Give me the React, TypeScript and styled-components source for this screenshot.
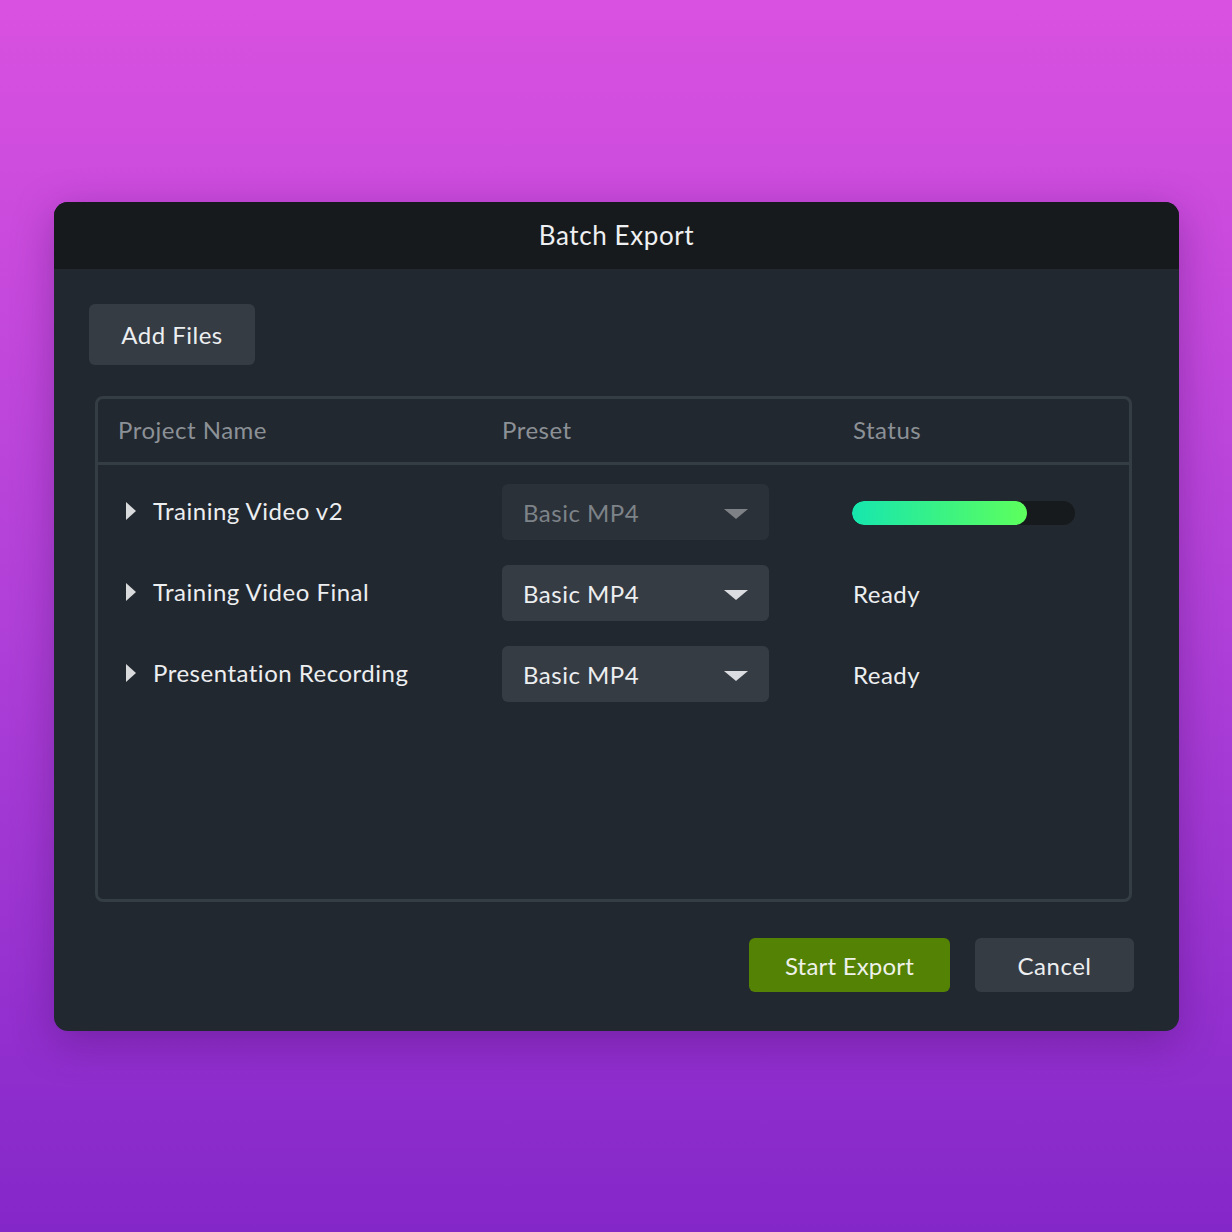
import styled, { createGlobalStyle } from 'styled-components';

const GlobalStyle = createGlobalStyle`
  html, body {
    margin: 0;
    padding: 0;
  }
  body {
    font-family: 'Lato', 'Noto Sans', sans-serif;
    letter-spacing: 0.5px;
    background: linear-gradient(180deg, #d951e0 0%, #b040d8 50%, #8427c9 100%);
    min-height: 1232px;
  }
`;

interface Project {
  name: string;
  disabled?: boolean;
  progress?: number;
}

const projects: Project[] = [
  { name: 'Training Video v2', disabled: true, progress: 78.5 },
  { name: 'Training Video Final' },
  { name: 'Presentation Recording' },
];

const App = () => {
  return (
    <>
      <GlobalStyle />
      <Page>
        <Dialog>
          <TitleBar>Batch Export</TitleBar>
          <Body>
            <SecondaryButton $width={166} $height={61}>
              Add Files
            </SecondaryButton>
            <Table>
              <HeaderRow>
                <HeaderCell>Project Name</HeaderCell>
                <HeaderCell>Preset</HeaderCell>
                <HeaderCell>Status</HeaderCell>
              </HeaderRow>
              <Rows>
                {projects.map(p => (
                  <Row key={p.name}>
                    <NameCell>
                      <Caret />
                      {p.name}
                    </NameCell>
                    <Select $disabled={p.disabled}>
                      Basic MP4
                      <Chevron $disabled={p.disabled} />
                    </Select>
                    <StatusCell>
                      {p.progress !== undefined ? (
                        <Track>
                          <Fill style={{ width: `${p.progress}%` }} />
                        </Track>
                      ) : (
                        'Ready'
                      )}
                    </StatusCell>
                  </Row>
                ))}
              </Rows>
            </Table>
            <Footer>
              <PrimaryButton>Start Export</PrimaryButton>
              <SecondaryButton $width={159} $height={54}>
                Cancel
              </SecondaryButton>
            </Footer>
          </Body>
        </Dialog>
      </Page>
    </>
  );
};
export default App;

const Page = styled.div`
  padding: 202px 0 0 54px;
  height: 1232px;
  box-sizing: border-box;
`;

const Dialog = styled.div`
  width: 1125px;
  height: 829px;
  border-radius: 14px;
  overflow: hidden;
  background: #22282f;
  box-shadow: 0 10px 40px rgba(60, 10, 90, 0.35);
  display: flex;
  flex-direction: column;
`;

const TitleBar = styled.div`
  height: 67px;
  background: #161a1d;
  color: #eef0f2;
  font-size: 26px;
  letter-spacing: 0.6px;
  display: flex;
  align-items: center;
  justify-content: center;
  padding-bottom: 2px;
  box-sizing: border-box;
`;

const Body = styled.div`
  flex: 1;
  padding: 35px 45px 39px 35px;
  display: flex;
  flex-direction: column;
  box-sizing: border-box;
`;

const SecondaryButton = styled.button<{ $width: number; $height: number }>`
  width: ${p => p.$width}px;
  height: ${p => p.$height}px;
  background: #363c44;
  color: #eceef0;
  border: none;
  border-radius: 6px;
  font-family: inherit;
  letter-spacing: inherit;
  font-size: 24px;
  padding: 0;
  cursor: pointer;
`;

const PrimaryButton = styled.button`
  width: 201px;
  height: 54px;
  background: #548204;
  color: #eef2ea;
  border: none;
  border-radius: 6px;
  font-family: inherit;
  letter-spacing: 0.2px;
  font-size: 24px;
  padding: 0;
  cursor: pointer;
`;

const Table = styled.div`
  margin: 31px 2px 0 6px;
  height: 506px;
  border: 3px solid #343d44;
  border-radius: 8px;
  box-sizing: border-box;
  display: flex;
  flex-direction: column;
`;

const columns = '384px 351px 1fr';

const HeaderRow = styled.div`
  height: 66px;
  border-bottom: 3px solid #343d44;
  display: grid;
  grid-template-columns: ${columns};
  align-items: center;
  padding: 0 0 0 20px;
  box-sizing: border-box;
`;

const HeaderCell = styled.div`
  color: #8b9196;
  font-size: 24px;
  padding-bottom: 3px;
`;

const Rows = styled.div`
  padding: 19px 0 0 20px;
  display: flex;
  flex-direction: column;
  gap: 25px;
`;

const Row = styled.div`
  display: grid;
  grid-template-columns: ${columns};
  align-items: center;
  height: 56px;
`;

const NameCell = styled.div`
  display: flex;
  align-items: center;
  color: #eceef0;
  font-size: 24px;
  padding-bottom: 4px;
`;

const Caret = styled.span`
  width: 0;
  height: 0;
  margin: 2px 17px 0 8px;
  border-top: 9px solid transparent;
  border-bottom: 9px solid transparent;
  border-left: 10px solid #d8dadc;
`;

const Select = styled.div<{ $disabled?: boolean }>`
  width: 267px;
  height: 56px;
  border-radius: 6px;
  background: ${p => (p.$disabled ? '#2b3138' : '#363c44')};
  color: ${p => (p.$disabled ? '#7d8388' : '#eceef0')};
  font-size: 24px;
  display: flex;
  align-items: center;
  justify-content: space-between;
  padding: 0 21px;
  box-sizing: border-box;
`;

const Chevron = styled.span<{ $disabled?: boolean }>`
  width: 0;
  height: 0;
  margin-top: 4px;
  border-left: 12px solid transparent;
  border-right: 12px solid transparent;
  border-top: 10px solid ${p => (p.$disabled ? '#7e8186' : '#dcdde0')};
`;

const StatusCell = styled.div`
  color: #eceef0;
  font-size: 24px;
`;

const Track = styled.div`
  width: 223px;
  height: 24px;
  border-radius: 12px;
  background: #161a1d;
  overflow: hidden;
  margin-top: 2px;
  margin-left: -1px;
`;

const Fill = styled.div`
  height: 100%;
  border-radius: 12px;
  background: linear-gradient(90deg, #16e6ae 0%, #5dff5c 100%);
`;

const Footer = styled.div`
  margin-top: 36px;
  display: flex;
  justify-content: flex-end;
  gap: 25px;
`;
